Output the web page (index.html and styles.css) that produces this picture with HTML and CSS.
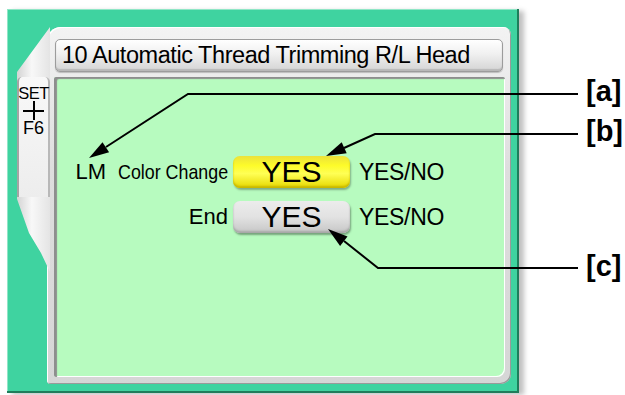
FILE: index.html
```html
<!DOCTYPE html>
<html lang="en">
<head>
  <meta charset="UTF-8">
  <title>Automatic Thread Trimming R/L Head</title>
  <link rel="stylesheet" href="styles.css">
</head>
<body>
  <div class="frame">
    <div class="tab">
      <div class="key">
        <span class="key-set">SET</span>
        <span class="plus"></span>
        <span class="key-f6">F6</span>
      </div>
    </div>
    <div class="panel">
      <div class="title">10 Automatic Thread Trimming R/L Head</div>
      <div class="screen">
        <div class="rows">
          <div class="label"><span>LM</span><span class="narrow">Color Change</span></div>
          <div class="btn yellow">YES</div>
          <div class="opt">YES/NO</div>

          <div class="label">End</div>
          <div class="btn gray">YES</div>
          <div class="opt">YES/NO</div>
        </div>
      </div>
    </div>
  </div>

  <svg class="callouts" width="625" height="395" viewBox="0 0 625 395">
    <g fill="none" stroke="#000" stroke-width="2">
      <polyline points="578,94 188,94 106,147"/>
      <polyline points="578,134 375,134 344,148"/>
      <polyline points="578,268 378,268 344,241"/>
    </g>
    <g fill="#000">
      <polygon points="89,158 109.1,152.2 102.5,142.2"/>
      <polygon points="326,156 346.7,153.3 341.7,142.3"/>
      <polygon points="328,229 347.5,236.6 340.1,246"/>
    </g>
    <g class="tags">
      <text x="586" y="101">[a]</text>
      <text x="586" y="141">[b]</text>
      <text x="586" y="276">[c]</text>
    </g>
  </svg>
</body>
</html>
```

FILE: styles.css
```css
body {
  margin: 0;
  background: #fff;
  font-family: "Liberation Sans", Arial, sans-serif;
  color: #000;
  position: relative;
  width: 625px;
  height: 395px;
  overflow: hidden;
}

.frame {
  box-sizing: border-box;
  margin: 9px 0 0 7px;
  width: 512px;
  height: 384px;
  padding: 18px 8px 9px 10px;
  display: flex;
  background: #3fd3a0;
  box-shadow: inset -2px -2px 0 #1f7d5b, inset 1px 1px 0 #8fe6c6, 5px 2px 5px rgba(0,0,0,0.25);
}

/* left SET+F6 tab */
.tab {
  width: 33px;
  height: 245px;
  flex: none;
  margin-right: -3px;
  background: linear-gradient(90deg, #d4d4d4, #f8f8f8 45%, #e4e4e4);
  clip-path: polygon(0 45px, 33px 0, 33px 245px, 24px 226px, 12px 206px, 0 172px);
}
.key {
  box-sizing: border-box;
  margin-top: 50px;
  height: 120px;
  border-left: 2px solid #a4a4a4;
  border-right: 2px solid #b8b8b8;
  border-radius: 5px 5px 0 0;
  background: linear-gradient(#f8f8f8, #ededed);
  padding-top: 8px;
  display: flex;
  flex-direction: column;
  align-items: center;
}
.key-set {
  font-size: 16.5px;
  line-height: 16px;
  letter-spacing: -0.6px;
}
.plus {
  width: 21px;
  height: 19px;
  background:
    linear-gradient(#000, #000) center / 21px 2px no-repeat,
    linear-gradient(#000, #000) center / 2px 19px no-repeat;
}
.key-f6 {
  font-size: 18px;
  line-height: 16px;
}

.panel {
  flex: 1;
  display: flex;
  flex-direction: column;
  padding: 12px 6px 7px 7px;
  background: linear-gradient(#f3f3f3, #dedede 40%, #d6d6d6);
  border-radius: 14px 8px 10px 4px;
  box-shadow: inset 1px 1px 0 #fff, inset -1px -1px 0 #9a9a9a;
}

.title {
  box-sizing: border-box;
  height: 33px;
  margin: 0 2px 0 1px;
  padding-left: 6px;
  font-size: 23.5px;
  letter-spacing: -0.45px;
  line-height: 31px;
  white-space: nowrap;
  border: 1px solid #9c9c9c;
  border-radius: 5px;
  background: linear-gradient(#ffffff, #f0f0f0 45%, #d4d4d4);
  box-shadow: inset 0 -2px 1px #b8b8b8, 0 1px 1px rgba(0,0,0,0.2);
}

.screen {
  flex: 1;
  margin-top: 5px;
  background: #b7fbbf;
  border-radius: 2px 2px 8px 2px;
  box-shadow: inset 3px 2px 1px #8e8e8e, inset -1px -1px 0 #ffffff;
}

.rows {
  display: grid;
  grid-template-columns: 156px 117px auto;
  grid-auto-rows: 32px;
  column-gap: 5px;
  row-gap: 13px;
  align-items: center;
  padding: 79px 0 0 18px;
}
.label {
  justify-self: end;
  font-size: 22px;
  line-height: 34px;
  white-space: nowrap;
  display: flex;
  align-items: baseline;
}
.narrow {
  display: inline-block;
  width: 110px;
  margin-left: 12px;
  font-size: 21px;
  transform: scaleX(0.85);
  transform-origin: left;
}

.btn {
  height: 32px;
  border-radius: 7px;
  font-size: 30px;
  line-height: 32px;
  text-align: center;
}
.yellow {
  background: linear-gradient(#ece23a, #fdfb2a 30%, #ffff55 55%, #e6d800);
  box-shadow: inset 0 -2px 2px #c8b800, 1px 2px 2px rgba(0,0,0,0.3);
}
.gray {
  background: linear-gradient(#ececec, #e2e2e2 50%, #c6c6c6);
  box-shadow: inset 0 -2px 2px #a8a8a8, 1px 2px 2px rgba(0,0,0,0.35);
}

.opt {
  margin-left: 4px;
  font-size: 23px;
  line-height: 34px;
  letter-spacing: -0.3px;
}

/* annotation overlay */
.callouts {
  position: absolute;
  top: 0;
  left: 0;
  pointer-events: none;
}
.tags {
  font-family: "Liberation Sans", Arial, sans-serif;
  font-weight: bold;
  font-size: 29px;
}
```
